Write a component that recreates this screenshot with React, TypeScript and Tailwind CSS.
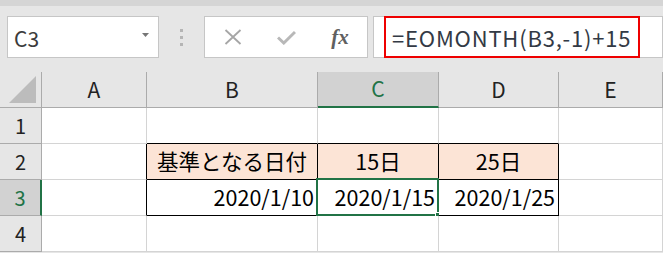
import React from "react";

const FONT = { fontFamily: '"Noto Sans CJK JP", "Noto Sans", sans-serif' };

const cols = ["A", "B", "C", "D", "E"];

type Cell = { text?: string; align?: "left" | "right" | "center"; fill?: boolean; br?: boolean; bb?: boolean };

const rows: Cell[][] = [
  [{}, { bb: true }, { bb: true }, { bb: true }, {}],
  [
    { br: true },
    { text: "基準となる日付", align: "center", fill: true, br: true, bb: true },
    { text: "15日", align: "center", fill: true, br: true, bb: true },
    { text: "25日", align: "center", fill: true, br: true, bb: true },
    {},
  ],
  [
    { br: true },
    { text: "2020/1/10", align: "right", br: true, bb: true },
    { text: "2020/1/15", align: "right", br: true, bb: true },
    { text: "2020/1/25", align: "right", br: true, bb: true },
    {},
  ],
  [{}, {}, {}, {}, {}],
];

export default function App() {
  return (
    <div className="w-[663px] h-[253px] overflow-hidden bg-[#e6e6e6] flex flex-col" style={FONT}>
      <div className="h-[6px] bg-[#d5d5d5] shrink-0" />
      <div className="flex items-start pt-[10px] pl-[7px] h-[66px] shrink-0">
        {/* Name box */}
        <div className="w-[152px] h-[42px] bg-white border border-[#c6c6c6] flex items-center justify-between pl-[6px] pr-[9px]">
          <span className="text-[21px] text-[#3b3b3b] leading-none mt-[3px]">C3</span>
          <svg width="7" height="4" viewBox="0 0 7 4" className="mt-[-4px]">
            <path d="M0 0 H7 L3.5 4 Z" fill="#767676" />
          </svg>
        </div>
        {/* separator dots */}
        <div className="w-[45px] h-[42px] flex flex-col items-center justify-center gap-[4px]">
          <div className="w-[3px] h-[3px] bg-[#b5b5b5]" />
          <div className="w-[3px] h-[3px] bg-[#b5b5b5]" />
          <div className="w-[3px] h-[3px] bg-[#b5b5b5]" />
        </div>
        {/* formula buttons */}
        <div className="w-[164px] h-[42px] bg-white border border-[#c6c6c6] flex items-center">
          <div className="w-[54px] flex justify-center pl-[1px]">
            <svg width="18" height="16" viewBox="0 0 18 16">
              <path d="M1.5 1 L16.5 15 M16.5 1 L1.5 15" stroke="#a6a6a6" strokeWidth="1.8" />
            </svg>
          </div>
          <div className="w-[54px] flex justify-center">
            <svg width="19" height="15" viewBox="0 0 19 15">
              <path d="M1 7.5 L6.8 13 L18 2" stroke="#b8b8b8" strokeWidth="3" fill="none" />
            </svg>
          </div>
          <div className="w-[54px] flex justify-center">
            <span
              className="text-[21px] italic font-bold text-[#606060] leading-none"
              style={{ fontFamily: '"Liberation Serif", "DejaVu Serif", serif' }}
            >
              fx
            </span>
          </div>
        </div>
        {/* formula bar */}
        <div className="ml-[5px] w-[290px] h-[42px] bg-white border border-[#c6c6c6] flex items-center pl-[10px]">
          <div className="w-[256px] h-[42px] border-2 border-[#ee0000] flex items-center pl-[6px] -mt-px">
            <span className="text-[22px] text-[#333a45] leading-none tracking-[0.8px]">=EOMONTH(B3,-1)+15</span>
          </div>
        </div>
      </div>
      {/* grid */}
      <div className="grid grid-cols-[42px_105px_171px_121px_120px_104px] grid-rows-[36px_36px_36px_36px_36px] shrink-0">
        {/* corner */}
        <div className="relative border-r border-b border-[#ababab] bg-[#e6e6e6]">
          <svg width="28" height="27" viewBox="0 0 28 27" className="absolute right-[4px] bottom-[4px]">
            <path d="M0 27 L27 0 L27 27 Z" fill="#bcbcbc" />
          </svg>
        </div>
        {cols.map((c) => (
          <div
            key={c}
            className={
              c === "C"
                ? "flex items-center justify-center bg-[#d2d2d2] border-r border-[#ababab] border-b-2 border-b-[#217346] text-[#217346] text-[21px]"
                : "flex items-center justify-center border-r border-b border-[#ababab] text-[#222] text-[21px]"
            }
          >
            {c}
          </div>
        ))}
        {rows.map((r, ri) => (
          <React.Fragment key={ri}>
            <div
              className={
                ri === 2
                  ? "flex items-center justify-center bg-[#d2d2d2] border-b border-[#ababab] border-r-2 border-r-[#217346] text-[#217346] text-[20px]"
                  : "flex items-center justify-center border-r border-b border-[#ababab] text-[#222] text-[20px]"
              }
            >
              {ri + 1}
            </div>
            {r.map((cell, ci) => {
              const isSel = ri === 2 && ci === 2;
              return (
                <div
                  key={ci}
                  className={
                    "relative flex items-center px-[3px] text-[21.5px] text-black whitespace-nowrap border-r border-b " +
                    (cell.fill ? "bg-[#fce4d6] " : "bg-white ") +
                    (cell.br ? "border-r-black " : "border-r-[#d4d4d4] ") +
                    (cell.bb ? "border-b-black " : "border-b-[#d4d4d4] ") +
                    (cell.align === "center" ? "justify-center" : cell.align === "right" ? "justify-end" : "justify-start")
                  }
                >
                  {cell.text}
                  {isSel && (
                    <>
                      <div className="absolute -left-[2px] -top-[2px] -right-px -bottom-px border-2 border-[#217346] pointer-events-none" />
                      <div className="absolute -right-[4px] -bottom-[4px] w-[7px] h-[7px] bg-[#217346] border border-white" />
                    </>
                  )}
                </div>
              );
            })}
          </React.Fragment>
        ))}
      </div>
    </div>
  );
}
